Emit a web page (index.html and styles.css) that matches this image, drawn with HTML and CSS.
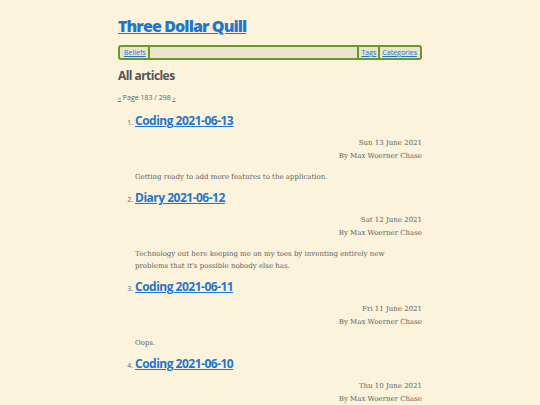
FILE: index.html
```html
<!DOCTYPE html>
<html lang="en">
<head>
<meta charset="utf-8">
<title>All articles — Three Dollar Quill</title>
<link rel="stylesheet" href="styles.css">
</head>
<body>
<div class="page">
  <header class="site-header">
    <h1 class="site-title"><a href="#">Three Dollar Quill</a></h1>
  </header>
  <nav class="nav">
    <a class="nav-link nav-first" href="#">Beliefs</a>
    <span class="nav-spacer"></span>
    <a class="nav-link nav-mid" href="#">Tags</a>
    <a class="nav-link" href="#">Categories</a>
  </nav>
  <main>
    <h2 class="heading">All articles</h2>
    <p class="pager"><a href="#">«</a> Page 183 / 298 <a href="#">»</a></p>
    <ol class="articles" start="1">
      <li class="article">
        <a class="article-title" href="#">Coding 2021-06-13</a>
        <div class="meta">
          <div>Sun 13 June 2021</div>
          <div>By Max Woerner Chase</div>
        </div>
        <p class="excerpt">Getting ready to add more features to the application.</p>
      </li>
      <li class="article">
        <a class="article-title" href="#">Diary 2021-06-12</a>
        <div class="meta">
          <div>Sat 12 June 2021</div>
          <div>By Max Woerner Chase</div>
        </div>
        <p class="excerpt">Technology out here keeping me on my toes by inventing entirely new problems that it's possible nobody else has.</p>
      </li>
      <li class="article">
        <a class="article-title" href="#">Coding 2021-06-11</a>
        <div class="meta">
          <div>Fri 11 June 2021</div>
          <div>By Max Woerner Chase</div>
        </div>
        <p class="excerpt">Oops.</p>
      </li>
      <li class="article">
        <a class="article-title" href="#">Coding 2021-06-10</a>
        <div class="meta">
          <div>Thu 10 June 2021</div>
          <div>By Max Woerner Chase</div>
        </div>
      </li>
    </ol>
  </main>
</div>
</body>
</html>
```

FILE: styles.css
```css
html, body {
  margin: 0;
  padding: 0;
}
body {
  background: #fbf3dc;
  color: #5f5f5f;
  font-family: "DejaVu Serif", serif;
  font-size: 7px;
}
.page {
  width: 304px;
  margin: 0 auto;
  padding-top: 15px;
}
a {
  color: #1f76cc;
}
.site-title {
  margin: 0;
  font-family: "Open Sans", "Noto Sans", sans-serif;
  font-size: 16px;
  line-height: 22px;
  font-weight: 800;
  letter-spacing: -0.9px;
}
.nav {
  margin-top: 8px;
  display: flex;
  align-items: center;
  height: 11px;
  border: 2px solid #6b9a22;
  border-radius: 3px;
  background: #e9e3cf;
  font-family: "Open Sans", "Noto Sans", sans-serif;
  font-size: 7px;
  line-height: 11px;
  padding: 0 1px 0 2px;
}
.nav-link {
  padding: 0 2px;
}
.nav-first {
  border-right: 2px solid #6b9a22;
}
.nav-mid {
  border-left: 2px solid #6b9a22;
  border-right: 2px solid #6b9a22;
}
.nav-spacer {
  flex: 1;
}
.heading {
  margin: 8px 0 0;
  font-family: "Open Sans", "Noto Sans", sans-serif;
  font-size: 12px;
  line-height: 16px;
  font-weight: 700;
  color: #555;
  letter-spacing: -0.55px;
}
.pager {
  margin: 9px 0 0;
  font-family: "Open Sans", "Noto Sans", sans-serif;
  font-size: 7px;
  line-height: 10px;
}
.pager a {
  font-size: 6px;
}
.articles {
  margin: 10px 0 0;
  padding-left: 17px;
}
.article::marker {
  font-family: "Open Sans", "Noto Sans", sans-serif;
  font-size: 7px;
  color: #666;
}
.article-title {
  font-family: "Open Sans", "Noto Sans", sans-serif;
  font-size: 12px;
  line-height: 16px;
  font-weight: 700;
  letter-spacing: -0.5px;
}
.meta {
  margin-top: 8px;
  text-align: right;
  line-height: 12.5px;
}
.excerpt {
  margin: 8.5px 0 7.5px;
  line-height: 12px;
  padding-right: 30px;
}
```
